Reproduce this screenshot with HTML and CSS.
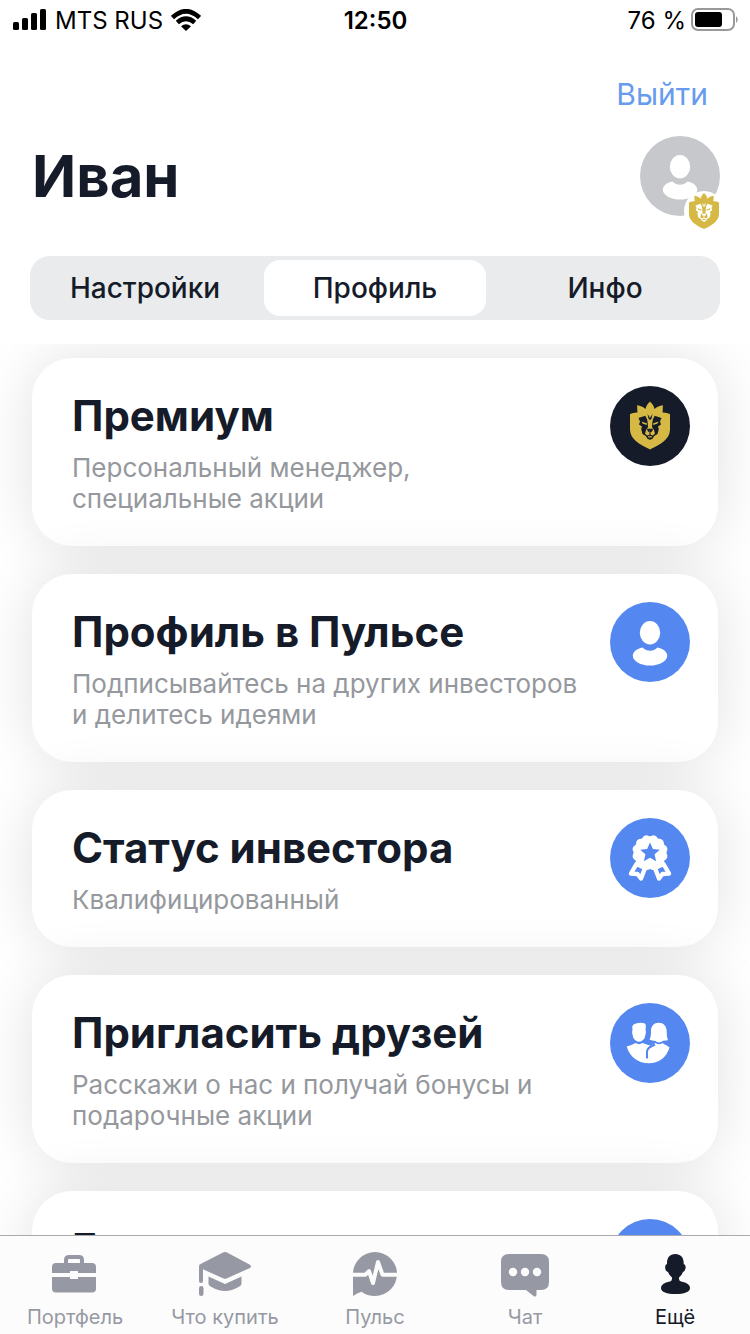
FILE: index.html
```html
<!DOCTYPE html>
<html lang="ru">
<head>
<meta charset="utf-8">
<meta name="viewport" content="width=device-width, initial-scale=1">
<title>Профиль</title>
<link rel="stylesheet" href="styles.css">
</head>
<body>
<svg class="defs" aria-hidden="true">
  <symbol id="lion-half" viewBox="0 0 80 80" overflow="visible">
    <path fill="var(--gold)" d="M40.2 15.500C37.500 18 36 20 35.500 23C33 20.800 30.500 19.600 27 19.200C27.500 22 27 24 27.500 26.500C25 26.300 22.500 26.800 20 28V44C20.500 53 29 58.500 40.200 63.500Z"/>
    <path fill="var(--face)" d="M28.500 32L35.300 29.700L37.200 33.500L37.700 37L38 41L36 44L35 47.500L37 49.500L40.200 48.500V54L37.500 52.700L35.800 50L32.500 48L31.200 43L32 40.500L29 38.500L30 35.500ZM37.500 28L40.200 32V34.200L38.500 32.800Z"/>
    <path fill="var(--gold)" d="M31.500 35.500L37 37.600L36.600 39L32.500 37.600ZM38 51.300L40.200 51.600V50.300L38 50.200Z"/>
    <path fill="var(--face)" d="M36.800 42.800H40.200V49H39.500V46.200L38 45.500Z"/>
  </symbol>
  <symbol id="lion" viewBox="0 0 80 80" overflow="visible">
    <use href="#lion-half" width="80" height="80"/>
    <use href="#lion-half" width="80" height="80" transform="translate(80 0) scale(-1 1)"/>
  </symbol>
  <symbol id="person" viewBox="0 0 80 80">
    <ellipse cx="40" cy="30.700" rx="10.200" ry="11.700"/>
    <path d="M32.500 45.500C35 48 37 48.700 40 48.700C43 48.700 45 48 47.500 45.500C53 46.500 57.300 50 57.300 53.500C57.300 59.500 49 63.600 40 63.600C31 63.600 22.800 59.500 22.800 53.500C22.800 50 27 46.500 32.500 45.500Z"/>
  </symbol>
</svg>
<div class="app">
  <header class="header">
    <div class="status">
      <div class="status-left">
        <svg width="34" height="22" viewBox="0 0 34 22" aria-hidden="true"><rect y="13" width="6" height="8" rx="1.500"/><rect x="9" y="9" width="6" height="12" rx="1.500"/><rect x="18" y="4" width="6" height="17" rx="1.500"/><rect x="27" width="6" height="21" rx="1.500"/></svg>
        <span>MTS RUS</span>
        <svg width="30" height="22" viewBox="0 0 30 22" aria-hidden="true"><g fill="none" stroke="#000" stroke-width="4.600"><path d="M1.500 8.500Q15-4 28.500 8.500"/><path d="M6.300 13.500Q15 6 23.700 13.500"/></g><path d="M10 17.300Q15 13.300 20 17.300L15 22Z"/></svg>
      </div>
      <time class="clock">12:50</time>
      <div class="status-right">
        <span>76 %</span>
        <svg width="48" height="24" viewBox="0 0 48 24" aria-hidden="true"><rect x="2" y="1" width="42" height="21" rx="6" fill="none" stroke="#999" stroke-width="2"/><rect x="5" y="4" width="27" height="15" rx="3"/><path fill="#999" d="M46 8Q49.500 11.500 46 15Z"/></svg>
      </div>
    </div>
    <div class="actions"><button class="logout" type="button">Выйти</button></div>
    <div class="user">
      <h1 class="name">Иван</h1>
      <div class="avatar">
        <svg class="avatar-person" viewBox="0 0 80 80" aria-hidden="true"><use href="#person"/></svg>
        <svg class="badge" viewBox="13.300 12.700 53.400 53.400" aria-hidden="true"><use href="#lion" width="80" height="80"/></svg>
      </div>
    </div>
    <div class="segments" role="tablist">
      <button class="segment" type="button" role="tab" aria-selected="false">Настройки</button>
      <button class="segment segment-active" type="button" role="tab" aria-selected="true">Профиль</button>
      <button class="segment" type="button" role="tab" aria-selected="false">Инфо</button>
    </div>
  </header>

  <main class="content">
    <section class="card">
      <div class="card-text">
        <h2 class="card-title">Премиум</h2>
        <p class="card-note">Персональный менеджер,<br>специальные акции</p>
      </div>
      <svg class="card-icon card-icon-dark" viewBox="0 0 80 80" aria-hidden="true"><use href="#lion" width="80" height="80"/></svg>
    </section>
    <section class="card">
      <div class="card-text">
        <h2 class="card-title">Профиль в Пульсе</h2>
        <p class="card-note">Подписывайтесь на других инвесторов<br>и делитесь идеями</p>
      </div>
      <svg class="card-icon" viewBox="0 0 80 80" aria-hidden="true"><use href="#person"/></svg>
    </section>
    <section class="card">
      <div class="card-text">
        <h2 class="card-title">Статус инвестора</h2>
        <p class="card-note">Квалифицированный</p>
      </div>
      <svg class="card-icon" viewBox="0 0 80 80" aria-hidden="true">
        <g fill="none" stroke="#fff" stroke-width="4.400" stroke-linejoin="round"><path d="M26.500 46L21 55.500L27.500 56L31 60.500L35 50Z"/><path d="M53.500 46L59 55.500L52.500 56L49 60.500L45 50Z"/></g>
        <circle cx="40" cy="34.700" r="16.500"/>
        <circle cx="40" cy="34.700" r="13.600" fill="none" stroke="#fff" stroke-width="8.500" stroke-linecap="round" pathLength="12" stroke-dasharray="0 1" transform="rotate(15 40 34.700)"/>
        <path fill="#5488f0" d="M40 24.500L42.900 31L49.800 31.700L44.600 36.300L46.100 43.200L40 39.700L33.900 43.200L35.400 36.300L30.200 31.700L37.100 31Z"/>
      </svg>
    </section>
    <section class="card">
      <div class="card-text">
        <h2 class="card-title">Пригласить друзей</h2>
        <p class="card-note">Расскажи о нас и получай бонусы и<br>подарочные акции</p>
      </div>
      <svg class="card-icon" viewBox="0 0 80 80" aria-hidden="true">
        <path d="M23.500 21.500Q29 18.500 35 20.500Q36 21 35.800 24L35.500 27Q36.500 28 35.500 31.500Q35 35 33.500 36.500Q31.500 38.800 29 38.800Q26.500 38.800 24.500 36.500Q23 35 22.500 31.500Q21.500 28.500 22.500 27L22.200 23.500Z"/>
        <path d="M41 28C41 23 44 19.800 48.700 19.800C53.500 19.800 56.500 23 56.700 28C56.700 32 57 35 58 37C56 37.700 54.500 37.700 53 37.700Q49 41.300 45 37.700C43 37.700 41.500 37.700 39.500 37C40.500 35 41 32 41 28Z"/>
        <path d="M16.700 43.500C20 42.500 23 41.500 25.500 40Q29 42.300 32.500 40L40.500 42.700L45.500 40Q49 42.500 52.500 40C55 41.700 57.500 42.700 59.500 44.500C56.500 54.500 48.500 60.300 39 60.300C28.500 60.300 19.500 54 16.700 43.500Z"/>
        <path fill="none" stroke="#5488f0" stroke-width="2" d="M45 41.500L41 43.500Q37 45.500 37 49V55.500"/>
      </svg>
    </section>
    <section class="card">
      <div class="card-text">
        <h2 class="card-title">Б</h2>
      </div>
      <svg class="card-icon" viewBox="0 0 80 80" aria-hidden="true"></svg>
    </section>
  </main>

  <nav class="tabbar">
    <a class="tab" href="#portfolio">
      <svg class="tab-icon" viewBox="0 0 56 48" aria-hidden="true"><path fill="none" stroke="currentColor" stroke-width="4" d="M19 14V10Q19 7 22 7H32Q35 7 35 10V14"/><path d="M9 13H45Q49 13 49 17V23H31V21H23V23H5V17Q5 13 9 13ZM5 27H23V29H31V27H49V38.500Q49 42.500 45 42.500H9Q5 42.500 5 38.500Z"/></svg>
      <span>Портфель</span>
    </a>
    <a class="tab" href="#buy">
      <svg class="tab-icon" viewBox="0 0 56 48" aria-hidden="true"><path d="M26.500 2.300Q28 1.500 29.500 2.300L53 14.700Q55 16.500 53 18L29.500 28.500Q28 29.200 26.500 28.500L6 19.300V31Q6 33 4 33Q2 33 2 31V16.500Q2 14.500 4 13.700ZM11.500 26.500L28 34L44.500 26.500V34Q44 36 41.500 37Q28 45 14.500 37Q12 36 11.500 34Z"/><rect x="2" y="36" width="4.500" height="10" rx="2.200"/></svg>
      <span>Что купить</span>
    </a>
    <a class="tab" href="#pulse">
      <svg class="tab-icon" viewBox="0 0 56 48" aria-hidden="true"><path d="M6 24A22 22 0 1 1 28 46Q20 46 14.700 41.700Q11 42.500 6 46Z"/><path fill="none" stroke="#fcfcfc" stroke-width="4" stroke-linejoin="round" d="M5 24.700H18.500L22 21L26 33L31 12L35.500 24.700H51"/></svg>
      <span>Пульс</span>
    </a>
    <a class="tab" href="#chat">
      <svg class="tab-icon" viewBox="0 0 56 48" aria-hidden="true"><path d="M12 4H44Q52 4 52 12V32Q52 40 44 40H39.500V45Q39 47.500 36.500 46L29 40H12Q4 40 4 32V12Q4 4 12 4Z"/><g fill="#fcfcfc"><circle cx="16" cy="22" r="4.200"/><circle cx="28" cy="22" r="4.200"/><circle cx="40" cy="22" r="4.200"/></g></svg>
      <span>Чат</span>
    </a>
    <a class="tab tab-active" href="#more" aria-current="page">
      <svg class="tab-icon" viewBox="0 0 56 48" aria-hidden="true"><path d="M28.300 4C34 4 37 8 36.700 14Q39 14.500 38.600 18Q38 21.500 36 22Q35 25 32 27.500Q31.500 31 34 31.500C40 32.500 43 35 43 38C43 42 37 44 28.500 44C20 44 14 42 14 38C14 35 17 32.500 23 31.500Q25.500 31 25 27.500Q22 25 21 22Q18.500 21.500 18.200 18Q17.800 14.500 20 14C19.700 8 22.500 4 28.300 4Z"/></svg>
      <span>Ещё</span>
    </a>
  </nav>
</div>
</body>
</html>
```

FILE: styles.css
```css
:root {
  --ink: #151b29;
  --muted: #95989d;
  --blue: #5488f0;
  --gold: #d5b944;
  --face: #151b29;
}

* {
  box-sizing: border-box;
}

body {
  margin: 0;
  background: #fff;
  color: var(--ink);
  font-family: Inter, "Liberation Sans", sans-serif;
}

button {
  border: 0;
  padding: 0;
  background: none;
  color: inherit;
  font: inherit;
  cursor: pointer;
}

.defs {
  position: absolute;
  width: 0;
  height: 0;
}

.app {
  display: flex;
  flex-direction: column;
  height: 100vh;
}

.header {
  padding: 0 30px 24px;
}

.status {
  display: grid;
  grid-template-columns: 1fr auto 1fr;
  align-items: center;
  height: 40px;
  margin: 0 -18px;
  padding-left: 1px;
  color: #000;
  font-size: 24px;
}

.status-left,
.status-right {
  display: flex;
  align-items: center;
  gap: 8px;
}

.status-right {
  justify-content: flex-end;
  gap: 4px;
}

.clock {
  font-weight: 600;
}

.actions {
  display: flex;
  justify-content: flex-end;
  padding: 36px 12px 0;
}

.logout {
  color: #669bed;
  font-size: 30px;
  line-height: 36px;
}

.user {
  display: flex;
  align-items: center;
  justify-content: space-between;
  padding-top: 24px;
}

.name {
  margin: 0;
  padding-left: 2px;
  font-size: 58px;
  line-height: 80px;
  font-weight: 700;
}

.avatar {
  position: relative;
  width: 80px;
  height: 80px;
  border-radius: 50%;
  background: #c6c8cb;
}

.avatar-person {
  display: block;
  fill: #fff;
}

.badge {
  --face: #fff;
  position: absolute;
  right: -4px;
  bottom: -15px;
  width: 40px;
  height: 40px;
  border-radius: 50%;
  background: #fff;
}

.segments {
  display: grid;
  grid-template-columns: repeat(3, 1fr);
  margin-top: 40px;
  border-radius: 20px;
  background: #e9ebec;
}

.segment {
  margin: 4px;
  border-radius: 16px;
  font-size: 28px;
  line-height: 56px;
  font-weight: 500;
}

.segment-active {
  background: #fff;
}

.content {
  display: flex;
  flex: 1;
  flex-direction: column;
  gap: 28px;
  min-height: 0;
  padding: 14px 32px;
  overflow: hidden auto;
  scrollbar-width: none;
}

.card {
  display: flex;
  flex-shrink: 0;
  align-items: flex-start;
  justify-content: space-between;
  padding: 28px 28px 32px 40px;
  border-radius: 40px;
  background: #fff;
  box-shadow: 0 0 60px rgba(0, 0, 0, 0.12);
}

.card-text {
  padding-top: 2px;
}

.card-title {
  margin: 0;
  font-size: 42px;
  line-height: 56px;
  font-weight: 700;
}

.card-note {
  margin: 8px 0 0;
  color: var(--muted);
  font-size: 26px;
  line-height: 31px;
}

.card-icon {
  flex-shrink: 0;
  width: 80px;
  height: 80px;
  margin-bottom: -12px;
  border-radius: 50%;
  background: var(--blue);
  fill: #fff;
}

.card-icon-dark {
  background: var(--ink);
}

.tabbar {
  display: grid;
  grid-template-columns: repeat(5, 1fr);
  padding: 14px 0 5px;
  border-top: 1px solid #a9abae;
  background: #fcfcfc;
}

.tab {
  display: flex;
  flex-direction: column;
  align-items: center;
  gap: 7px;
  color: #9699a3;
  font-size: 20px;
  line-height: 24px;
  text-decoration: none;
}

.tab-icon {
  width: 56px;
  height: 48px;
  fill: currentColor;
}

.tab-active {
  color: var(--ink);
}
```
